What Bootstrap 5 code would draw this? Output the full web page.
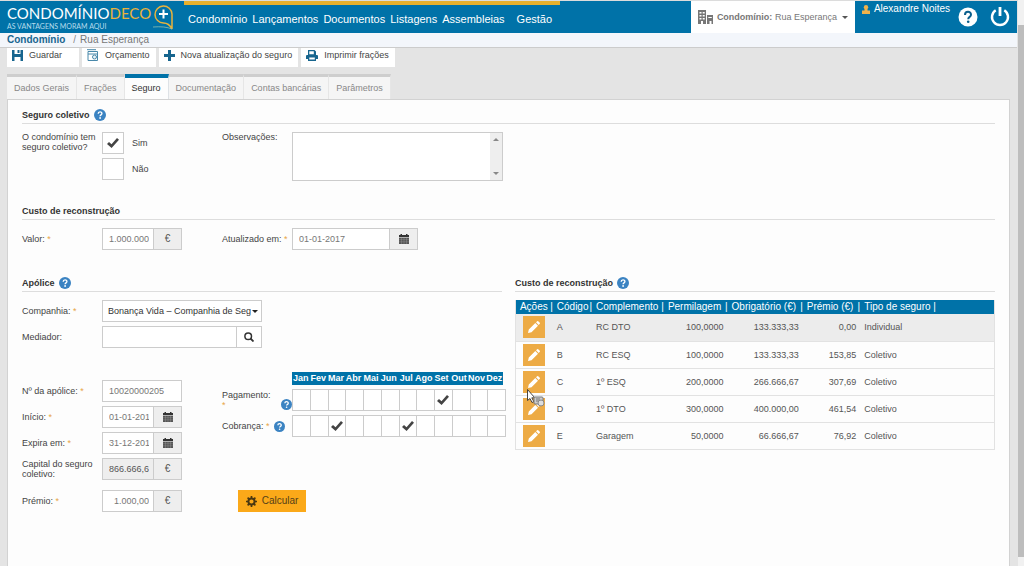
<!DOCTYPE html>
<html lang="pt">
<head>
<meta charset="utf-8">
<meta name="viewport" content="width=device-width, initial-scale=1">
<title>Condomínio DECO+ | Seguro</title>
<link rel="stylesheet" href="https://cdn.jsdelivr.net/npm/bootstrap@5.3.0/dist/css/bootstrap.min.css">
<style>
:root{--brand:#0072a8;--line:#ccc;--amber:#edab45}
body{font:9px/14px "Liberation Sans",Arial,sans-serif;color:#444;background:#e4e4e4}
a{color:inherit;text-decoration:none}
svg{display:block;flex:none}
.page-main{min-width:0;border-top:1px solid #dcdcdc;padding-right:1px}
/* top bar */
.topbar{background:var(--brand);height:32px;color:#fff}
.brand-box{width:184px;padding:4px 0 0 7px;gap:2px}
.brand-name{font:15px/17px Lato,sans-serif}
.brand-name b{font-weight:400;color:#e8b33c}
.brand-tag{font:7px/8px Lato,sans-serif;color:#b5dcec}
.main-menu{border-top:4px solid #e8b02c;font-size:11px;padding:0 7px 0 4px;gap:5px;width:376px}
.main-menu a:last-child{margin-left:7px}
.cond-box{background:#fff;color:#777;border:0;width:164px;padding:0 7px;font-size:9px;gap:4px}
.caret{width:0;height:0;border:3px solid transparent;border-top-color:#555;border-bottom:0}
.user-box{width:162px;padding-left:7px}
.user-name{font-size:10px;line-height:16px;gap:4px;width:92px}
.icon-btn{border:0;background:none;padding:0;color:#fff}
.crumbs{background:#f3f6fb;border-bottom:1px solid #ccc;padding-left:7px;font-size:10px;line-height:14px;color:#777;gap:4px}
.crumbs a{font-weight:700;color:#18658f}
/* tools and tabs */
.tools{padding:0 7px 7px;gap:3px}
.tool-btn{border:0;background:#fff;color:#444;padding:0 6px 5px 5px;gap:6px}
.tool-btn:first-child{padding-right:17px}
.tab-strip{padding-left:7px;border:0}
.tab-strip .nav-link{border:0;border-right:1px solid #e6e6e6;border-top:3px solid #cecece;border-radius:0;background:#f5f5f5;color:#888;padding:4px 7px;line-height:14px;margin:0}
.tab-strip .nav-link.active{border-top:4px solid var(--brand);background:#fdfdfd;color:#333;padding-top:3px}
.panel{background:#fdfdfd;border:1px solid #d2d2d2;border-bottom:0;margin:0 7px;padding:7px 14px 0}
/* sections */
.sec-title{font-size:9px;font-weight:700;line-height:16px;color:#333;border-bottom:1px solid #ddd;margin:0 0 8px;gap:4px}
.sec-body{margin-bottom:22px}
.sec-body-wide{margin-bottom:25px}
.label-a{width:80px;line-height:10px}
.label-b{width:70px;line-height:10px}
.group-a{width:200px}
.star{color:#e8a545}
.fld{border:1px solid var(--line);border-radius:0;background:#fff;color:#777;height:22px;padding:0 4px 0 6px;font-size:9px;line-height:20px;min-width:0}
.fld-amount{width:52px}
.fld-policy{width:80px}
.fld-date{width:98px}
.fld-search{width:135px}
.fld:disabled{background:#eee;color:#555}
select.fld{width:160px;color:#333;padding:0 10px 0 5px;appearance:none;background:#fff url("data:image/svg+xml,%3Csvg xmlns='http://www.w3.org/2000/svg' width='6' height='3'%3E%3Cpath d='M0 0h6L3 3z' fill='%23222'/%3E%3C/svg%3E") no-repeat right 3px center}
.addon{border:1px solid var(--line);border-left:0;background:#eee;color:#555;width:28px;height:22px;padding:0;font-size:10px}
.addon-white{background:#fff;width:25px}
.notes{width:211px;height:49px;border:1px solid var(--line);resize:none;padding:3px 18px 3px 6px}
.notes-scroll{position:absolute;right:1px;top:1px;bottom:1px;width:12px;background:#eee;padding:5px 3px}
.tick{appearance:none;margin:0;border:1px solid var(--line);background:#fff no-repeat center;width:22px;height:22px;border-radius:0}
.tick:checked{background-image:url("data:image/svg+xml,%3Csvg xmlns='http://www.w3.org/2000/svg' width='12' height='10'%3E%3Cpath d='M0 6l2-2 2.500 2.200L10 0l2 1.800L4.600 10z' fill='%23444'/%3E%3C/svg%3E")}
.month-names,.month-row{display:grid;grid-template-columns:repeat(12,1fr)}
.month-names{background:var(--brand);color:#fff;font-weight:700;line-height:13px;text-align:center;width:211px;margin-left:70px;margin-bottom:4px}
.month-row{width:214px;border-left:1px solid var(--line)}
.month-row .tick{width:100%;border-left:0}
.gap-above{margin-top:6px}
.calc-btn{background:#fba919;border:0;color:#554018;font-size:10px;height:22px;width:68px;gap:5px;margin-left:16px}
.halves{display:grid;grid-template-columns:repeat(2,minmax(0,1fr));gap:13px}
/* fractions table */
.frac{width:100%;table-layout:fixed;border:1px solid #e2e2e2;border-top:0;color:#555}
.frac th{background:var(--brand);color:#fff;font-size:10px;font-weight:400;line-height:14px;padding:0 0 0 4px;white-space:nowrap}
.frac th span{float:right}
.frac td{height:27px;padding:0 4px;border-bottom:1px solid #e2e2e2}
.frac .current{background:#ececec}
.edit-btn{background:var(--amber);border:0;width:22px;height:22px;padding:0;margin-left:3px;position:relative}
.pointer{position:absolute;left:4px;top:18px;z-index:2}
/* scroll strip at the window's edge */
.strip{width:6px;background:#f1f1f1;padding:25px 0 9px}
.strip div{background:#bdbdbd}
</style>
</head>
<body>
<svg class="d-none" aria-hidden="true">
  <symbol id="help" viewBox="0 0 12 12"><circle cx="6" cy="6" r="6" fill="#3b83c2"/><path d="M4.200 4.700C4.200 2.300 7.900 2.300 7.900 4.500C7.900 5.900 6.100 5.900 6.100 7.200" fill="none" stroke="#fff" stroke-width="1.400"/><circle cx="6.100" cy="9" r=".9" fill="#fff"/></symbol>
  <symbol id="cal" viewBox="0 0 10 10"><path d="M0 1h1.500V0h1.500v1h4V0h1.500v1H10v2H0z" fill="#333"/><path d="M0 3.600h10V10H0z" fill="#555"/><path d="M0 5.700h10M0 7.800h10M2.500 4v6M5 4v6M7.500 4v6" stroke="#999" stroke-width=".4"/></symbol>
  <symbol id="pencil" viewBox="0 0 12 12"><path d="M0 12l.8-3.500 6.500-6.500 2.700 2.700-6.500 6.500zM8 1.300L9.200.2q.5-.4 1 0L11.800 1.800q.4.500 0 1L10.700 4z" fill="#fff"/></symbol>
</svg>
<div class="d-flex min-vh-100">
<div class="page-main flex-grow-1 d-flex flex-column">
  <header class="topbar d-flex">
    <a href="#" class="brand-box d-flex">
      <div><div class="brand-name">CONDOMÍNIO<b>DECO</b></div><div class="brand-tag">AS VANTAGENS MORAM AQUI</div></div>
      <svg width="22" height="26" viewBox="0 0 22 26" aria-hidden="true"><path d="M19 24V9A8.500 8.500 0 1 0 10.500 18Q16 18 19 24z" fill="none" stroke="#e8b33c" stroke-width="1.500"/><path d="M10.500 4.500v9M6 9h9" stroke="#fff" stroke-width="2"/><path d="M0 22q12-1 19 2" fill="none" stroke="#8fbfae" stroke-width=".8"/></svg>
    </a>
    <nav class="main-menu d-flex align-items-center">
      <a href="#">Condomínio</a><a href="#">Lançamentos</a><a href="#">Documentos</a><a href="#">Listagens</a><a href="#">Assembleias</a><a href="#">Gestão</a>
    </nav>
    <button class="cond-box ms-auto d-flex align-items-center" type="button">
      <svg width="15" height="14" viewBox="0 0 15 14"><path d="M0 0h8v14H0z" fill="#777"/><path d="M1.500 2h2v1.500h-2zM4.700 2h2v1.500h-2zM1.500 5h2v1.500h-2zM4.700 5h2v1.500h-2zM1.500 8h2v1.500h-2zM4.700 8h2v1.500h-2zM3 11h2v3H3z" fill="#fff"/><path d="M9 5h6v9h-1.500v-3h-2v3H9z" fill="#777"/><path d="M10.300 7h3.500v1h-3.500z" fill="#fff"/></svg>
      <span class="flex-grow-1 text-start text-nowrap"><b>Condomínio:</b> Rua Esperança</span><i class="caret"></i>
    </button>
    <div class="user-box d-flex">
      <div class="user-name d-flex text-nowrap align-self-start"><svg class="mt-1" width="8" height="9" viewBox="0 0 8 9"><circle cx="4" cy="2.200" r="2.200" fill="#f0b24a"/><path d="M0 5.500h2.500V4h3v1.500H8V9H0z" fill="#f0b24a"/></svg>Alexandre Noites</div>
      <button class="icon-btn ms-1" type="button" aria-label="Ajuda"><svg width="20" height="20" viewBox="0 0 20 20"><circle cx="10" cy="10" r="9.500" fill="#fff"/><path d="M7 8C7 3.800 13 3.900 13 7.700C13 10 10.200 9.700 10.200 12.200" fill="none" stroke="#0b5f8c" stroke-width="2"/><circle cx="10.200" cy="14.700" r="1.300" fill="#0b5f8c"/></svg></button>
      <button class="icon-btn ms-2 ps-1" type="button" aria-label="Sair"><svg width="20" height="20" viewBox="0 0 20 20"><path d="M5.700 3.200A8 8 0 1 0 14.300 3.200" fill="none" stroke="#fff" stroke-width="2.400"/><path d="M10 0v9" stroke="#fff" stroke-width="2.800"/></svg></button>
    </div>
  </header>
  <nav class="crumbs d-flex" aria-label="Localização"><a href="#">Condomínio</a><span class="text-black-50 ps-1">/</span><span>Rua Esperança</span></nav>

  <div class="tools d-flex">
    <button class="tool-btn d-flex align-items-center" type="button"><svg width="11" height="11" viewBox="0 0 11 11"><path d="M0 0h2.500v4h6V0H11v11H8.500V7h-6v4H0z" fill="#17658e"/><path d="M5.500 0h2v3h-2z" fill="#17658e"/></svg>Guardar</button>
    <button class="tool-btn d-flex align-items-center" type="button"><svg width="12" height="12" viewBox="0 0 12 12"><path d="M1 2.500h9.500v9H1zM1 5h9.500M0 .7h9" fill="none" stroke="#4988aa"/><circle cx="7.500" cy="8" r="2" fill="#e9f2f6" stroke="#4988aa"/></svg>Orçamento</button>
    <button class="tool-btn d-flex align-items-center" type="button"><svg width="11" height="11" viewBox="0 0 11 11"><path d="M5.500 0v11M0 5.500h11" stroke="#17658e" stroke-width="3"/></svg>Nova atualização do seguro</button>
    <button class="tool-btn d-flex align-items-center" type="button"><svg width="12" height="11" viewBox="0 0 12 11"><path d="M2 0h6.500L10 1.500V5h1q1 0 1 1v3h-2v2H2V9H0V6q0-1 1-1h1z" fill="#17658e"/><path d="M3.300 1.300h4.500v3H3.300zM3.300 7.500h5.500v2H3.300z" fill="#fff"/></svg>Imprimir frações</button>
  </div>

  <nav class="nav nav-tabs tab-strip">
    <a class="nav-link" href="#">Dados Gerais</a><a class="nav-link" href="#">Frações</a><a class="nav-link active" aria-current="page" href="#">Seguro</a><a class="nav-link" href="#">Documentação</a><a class="nav-link" href="#">Contas bancárias</a><a class="nav-link" href="#">Parâmetros</a>
  </nav>

  <main class="panel flex-grow-1">
    <h2 class="sec-title d-flex align-items-center">Seguro coletivo <svg width="12" height="12"><use href="#help"/></svg></h2>
    <div class="d-flex sec-body">
      <div class="group-a d-flex">
        <div class="label-a">O condomínio tem<br>seguro coletivo?</div>
        <div class="d-flex flex-column gap-1">
          <label class="d-flex align-items-center gap-2"><input class="tick" type="checkbox" checked>Sim</label>
          <label class="d-flex align-items-center gap-2"><input class="tick" type="checkbox">Não</label>
        </div>
      </div>
      <label class="label-b" for="obs">Observações:</label>
      <div class="position-relative d-flex">
        <textarea class="notes" id="obs"></textarea>
        <div class="notes-scroll d-flex flex-column justify-content-between" aria-hidden="true"><svg width="6" height="3"><path d="M0 3h6L3 0z" fill="#888"/></svg><svg width="6" height="3"><path d="M0 0h6L3 3z" fill="#888"/></svg></div>
      </div>
    </div>

    <h2 class="sec-title">Custo de reconstrução</h2>
    <div class="d-flex sec-body-wide">
      <div class="group-a d-flex align-items-center">
        <label class="label-a" for="valor">Valor: <span class="star">*</span></label>
        <input class="fld fld-amount" id="valor" value="1.000.000"><span class="addon d-flex align-items-center justify-content-center">€</span>
      </div>
      <div class="d-flex align-items-center">
        <label class="label-b text-nowrap" for="atual">Atualizado em: <span class="star">*</span></label>
        <input class="fld fld-date" id="atual" value="01-01-2017"><button class="addon d-flex align-items-center justify-content-center" type="button" aria-label="Calendário"><svg width="10" height="10"><use href="#cal"/></svg></button>
      </div>
    </div>

    <div class="halves">
      <section>
        <h2 class="sec-title d-flex align-items-center">Apólice <svg width="12" height="12"><use href="#help"/></svg></h2>
        <div class="d-flex flex-column gap-1">
          <div class="d-flex align-items-center"><label class="label-a" for="comp">Companhia: <span class="star">*</span></label><select class="fld" id="comp"><option>Bonança Vida – Companhia de Seg</option></select></div>
          <div class="d-flex align-items-center"><label class="label-a" for="med">Mediador:</label><input class="fld fld-search" id="med"><button class="addon addon-white d-flex align-items-center justify-content-center" type="button" aria-label="Procurar"><svg width="10" height="10" viewBox="0 0 10 10"><circle cx="4.200" cy="4.200" r="3.300" fill="none" stroke="#333" stroke-width="1.500"/><path d="M6.500 6.500L9.500 9.500" stroke="#333" stroke-width="1.800"/></svg></button></div>
        </div>
        <div class="d-flex mt-4">
          <div class="group-a d-flex flex-column flex-shrink-0 gap-1 pt-2">
            <div class="d-flex align-items-center"><label class="label-a" for="num">Nº da apólice: <span class="star">*</span></label><input class="fld fld-policy" id="num" value="10020000205"></div>
            <div class="d-flex align-items-center"><label class="label-a" for="ini">Início: <span class="star">*</span></label><input class="fld fld-amount" id="ini" value="01-01-2017"><button class="addon d-flex align-items-center justify-content-center" type="button" aria-label="Calendário"><svg width="10" height="10"><use href="#cal"/></svg></button></div>
            <div class="d-flex align-items-center"><label class="label-a" for="fim">Expira em: <span class="star">*</span></label><input class="fld fld-amount" id="fim" value="31-12-2017"><button class="addon d-flex align-items-center justify-content-center" type="button" aria-label="Calendário"><svg width="10" height="10"><use href="#cal"/></svg></button></div>
            <div class="d-flex align-items-center"><label class="label-a" for="cap">Capital do seguro<br>coletivo:</label><input class="fld fld-amount" id="cap" value="866.666,67" disabled><span class="addon d-flex align-items-center justify-content-center">€</span></div>
            <div class="d-flex align-items-center gap-above"><label class="label-a" for="pre">Prémio: <span class="star">*</span></label><input class="fld fld-amount text-end" id="pre" value="1.000,00"><span class="addon d-flex align-items-center justify-content-center">€</span></div>
          </div>
          <div class="d-flex flex-column flex-shrink-0">
            <div class="month-names"><span>Jan</span><span>Fev</span><span>Mar</span><span>Abr</span><span>Mai</span><span>Jun</span><span>Jul</span><span>Ago</span><span>Set</span><span>Out</span><span>Nov</span><span>Dez</span></div>
            <div class="d-flex align-items-center mb-1">
              <div class="label-b d-flex align-items-end justify-content-between"><span>Pagamento:<br><span class="star">*</span></span><svg width="11" height="11"><use href="#help"/></svg></div>
              <div class="month-row" id="pag"></div>
            </div>
            <div class="d-flex align-items-center">
              <div class="label-b d-flex align-items-center gap-1"><span>Cobrança: <span class="star">*</span></span><svg width="11" height="11"><use href="#help"/></svg></div>
              <div class="month-row" id="cob"></div>
            </div>
            <button class="calc-btn mt-auto d-flex align-items-center justify-content-center" type="button"><svg width="11" height="11" viewBox="0 0 11 11"><circle cx="5.500" cy="5.500" r="3.100" fill="none" stroke="#4a3812" stroke-width="2"/><path d="M5.500 0v2M5.500 9v2M0 5.500h2M9 5.500h2M1.600 1.600L3 3M8 8l1.400 1.400M9.400 1.600L8 3M3 8L1.600 9.400" stroke="#4a3812" stroke-width="1.700"/></svg>Calcular</button>
          </div>
        </div>
      </section>

      <section>
        <h2 class="sec-title d-flex align-items-center">Custo de reconstrução <svg width="12" height="12"><use href="#help"/></svg></h2>
        <table class="frac">
          <colgroup><col style="width:7.8%"><col style="width:8.2%"><col style="width:15%"><col style="width:13.3%"><col style="width:15.7%"><col style="width:12%"><col></colgroup>
          <thead><tr><th>Ações<span>|</span></th><th>Código<span>|</span></th><th>Complemento<span>|</span></th><th>Permilagem<span>|</span></th><th>Obrigatório (€)<span>|</span></th><th>Prémio (€)<span>|</span></th><th>Tipo de seguro |</th></tr></thead>
          <tbody id="rows"></tbody>
        </table>
      </section>
    </div>
  </main>
</div>
<div class="strip d-flex flex-shrink-0" aria-hidden="true"><div class="flex-grow-1"></div></div>
</div>
<script>
const months = ['Jan','Fev','Mar','Abr','Mai','Jun','Jul','Ago','Set','Out','Nov','Dez'];
function monthRow(id, label, on) {
  document.getElementById(id).innerHTML = months.map(m =>
    `<input class="tick" type="checkbox" aria-label="${label} ${m}" ${on.includes(m) ? 'checked' : ''}>`).join('');
}
monthRow('pag', 'Pagamento', ['Set']);
monthRow('cob', 'Cobrança', ['Mar', 'Jul']);
const pointer = `<svg class="pointer" width="19" height="20" viewBox="0 0 19 20"><path d="M.5.500v11l2.500-2 2 4 1.800-1-2-3.700h3z" fill="#fff" stroke="#333" stroke-width=".9"/><rect x="7" y="8" width="9" height="7" rx="1" fill="#ccc" stroke="#777"/><path d="M9 10h4M9 12h3" stroke="#777"/><circle cx="14" cy="14" r="3" fill="#ddd" stroke="#888"/></svg>`;
document.getElementById('rows').innerHTML = [
  ['A','RC DTO','100,0000','133.333,33','0,00','Individual'],
  ['B','RC ESQ','100,0000','133.333,33','153,85','Coletivo'],
  ['C','1º ESQ','200,0000','266.666,67','307,69','Coletivo'],
  ['D','1º DTO','300,0000','400.000,00','461,54','Coletivo'],
  ['E','Garagem','50,0000','66.666,67','76,92','Coletivo']
].map((r, i) => `<tr class="${i ? '' : 'current'}"><td><button class="edit-btn d-flex align-items-center justify-content-center" ${i === 2 ? 'id="hovered"' : ''} type="button" aria-label="Editar ${r[0]}"><svg width="12" height="12"><use href="#pencil"/></svg></button></td>` +
  r.map((c, j) => `<td class="${j > 1 && j < 5 ? 'text-end' : ''}">${c}</td>`).join('') + '</tr>').join('');
const hovered = document.getElementById('hovered');
hovered.style.zIndex = 1;
hovered.insertAdjacentHTML('beforeend', pointer);
</script>
<script src="https://cdn.jsdelivr.net/npm/bootstrap@5.3.0/dist/js/bootstrap.bundle.min.js"></script>
</body>
</html>
